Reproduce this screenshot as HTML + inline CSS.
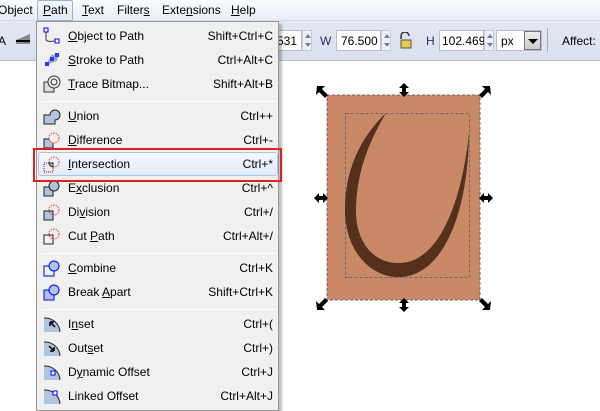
<!DOCTYPE html>
<html><head><style>
*{margin:0;padding:0;box-sizing:border-box}
body{width:600px;height:400px;overflow:hidden;background:#fff;font-family:"Liberation Sans",sans-serif;font-size:12px;color:#000;position:relative}
.mb{position:absolute;left:0;top:0;width:600px;height:21px;background:linear-gradient(#fafbfd,#e9edf6);border-bottom:1px solid #d5dbe8}
.mb span{position:absolute;top:3px}
.tb{position:absolute;left:0;top:21px;width:600px;height:40px;background:linear-gradient(#e4e8f3,#d9dfee);border-bottom:1px solid #b8bfcf}
.inp{position:absolute;top:30px;height:21px;background:#fff;border:1px solid #b5bccb;padding:3px 4px;font-size:12px}
.spin{position:absolute;top:30px;width:10px;height:21px;border:1px solid #c5cad6;background:#eef0f5}
.spin:before{content:"";position:absolute;left:2px;top:3px;border:3px solid transparent;border-bottom:4px solid #6a7fb0;border-top:0}
.spin:after{content:"";position:absolute;left:2px;top:12px;border:3px solid transparent;border-top:4px solid #6a7fb0;border-bottom:0}
.menu{position:absolute;left:36px;top:21px;width:243px;height:390px;background:#f0f0f0;border:1px solid #979797;box-shadow:3px 3px 2px rgba(0,0,0,.25)}
.it{position:absolute;left:31px;width:205px;height:22px;line-height:22px;font-size:12px}
.it .k{position:absolute;right:0;top:0}
.sep{position:absolute;left:5px;width:234px;height:1px;background:#d7d7d7;border-bottom:1px solid #fff}
.ic{position:absolute;left:6px;width:18px;height:18px}
u{text-decoration:underline}
</style></head><body>
<div class="mb">
<span style="left:-2px">Object</span>
<span style="left:37px;top:0;width:36px;height:21px;border:1px solid #9bb0d3;background:linear-gradient(#f6f9fd,#dfe8f5);border-radius:2px"></span>
<span style="left:43px"><u>P</u>ath</span>
<span style="left:82px"><u>T</u>ext</span>
<span style="left:117px">Filter<u>s</u></span>
<span style="left:162px">Exte<u>n</u>sions</span>
<span style="left:231px"><u>H</u>elp</span>
</div>
<div class="tb"></div>
<div style="position:absolute;left:-2px;top:34px;font-size:12px">A</div>
<svg style="position:absolute;left:14px;top:32px" width="18" height="14"><path d="M2 8 L16 2 L16 12 L2 12Z" fill="#888"/><path d="M2 9 H16" stroke="#000" stroke-width="2"/></svg>
<div class="inp" style="left:250px;width:52px;text-align:right">.531</div><div class="spin" style="left:302px"></div>
<span style="position:absolute;left:320px;top:34px;color:#203060">W</span>
<div class="inp" style="left:336px;width:45px">76.500</div><div class="spin" style="left:381px"></div>
<svg style="position:absolute;left:398px;top:32px" width="16" height="18"><path d="M3 7 V4 a4 4 0 0 1 8 0" fill="none" stroke="#333" stroke-width="1.5"/><rect x="3" y="8" width="10" height="8" fill="#e8c84a" stroke="#555"/></svg>
<span style="position:absolute;left:426px;top:34px;color:#203060">H</span>
<div class="inp" style="left:439px;width:45px;padding:3px 2px">102.469</div><div class="spin" style="left:484px"></div>
<div class="inp" style="left:496px;width:46px">px</div>
<div style="position:absolute;left:524px;top:31px;width:17px;height:19px;background:linear-gradient(#eee,#ccc);border:1px solid #777"><div style="position:absolute;left:3px;top:7px;border:5px solid transparent;border-top:5px solid #000;border-bottom:0"></div></div>
<div style="position:absolute;left:547px;top:28px;width:1px;height:24px;background:#aab"></div>
<span style="position:absolute;left:562px;top:34px">Affect:</span>

<svg style="position:absolute;left:300px;top:80px" width="210" height="240">
<rect x="27" y="15" width="153" height="205" fill="#c98966" stroke="#667" stroke-dasharray="3,2"/>
<rect x="45.5" y="33.5" width="124" height="164" fill="none" stroke="#667" stroke-dasharray="3,2"/>
<path d="M86 33 C60 58 45 90 45 130 C45 170 70 198 100 197 C140 196 168 140 169 53 C162 120 140 182 100 183 C72 184 55 160 56 128 C57 90 70 60 86 33Z" fill="#55301c"/>
<g fill="#000">
<path d="M17 6 l8 0 -3 3 6 6 -3 3 -6 -6 -3 3z"/>
<path d="M190 6 l-8 0 3 3 -6 6 3 3 6 -6 3 3z"/>
<path d="M17 230 l8 0 -3 -3 6 -6 -3 -3 -6 6 -3 -3z"/>
<path d="M190 230 l-8 0 3 -3 -6 -6 3 -3 6 6 3 -3z"/>
<path d="M104 3 l5 5 h-3 v4 h3 l-5 5 -5 -5 h3 v-4 h-3z"/>
<path d="M104 218 l5 5 h-3 v4 h3 l-5 5 -5 -5 h3 v-4 h-3z"/>
<path d="M14 118 l5 -5 v3 h4 v-3 l5 5 -5 5 v-3 h-4 v3z"/>
<path d="M179 118 l5 -5 v3 h4 v-3 l5 5 -5 5 v-3 h-4 v3z"/>
</g>
</svg>

<div class="menu">
<svg class="ic" style="top:5px"><rect x="1" y="1" width="4" height="4" fill="#fff" stroke="#00f"/><rect x="12" y="12" width="4" height="4" fill="#fff" stroke="#00f"/><path d="M3 5 V12 C3 14 6 15 12 14" fill="none" stroke="#333"/></svg>
<svg class="ic" style="top:29px"><path d="M3 14 L8 4 L16 3 L14 10Z" fill="#9ab"/><rect x="2" y="11" width="4" height="4" fill="#33f"/><rect x="7" y="6" width="4" height="4" fill="#33f"/><rect x="12" y="2" width="4" height="4" fill="#33f"/></svg>
<svg class="ic" style="top:53px"><rect x="1" y="7" width="10" height="10" fill="#ddd" stroke="#333"/><circle cx="11" cy="7" r="6" fill="#eee" stroke="#333"/><circle cx="11" cy="7" r="3" fill="none" stroke="#333"/></svg>
<div class="sep" style="top:79px"></div>
<svg class="ic" style="top:85px"><path d="M1 8 H7 A5 5 0 1 1 12 13 V17 H1Z" fill="#b0c4de" stroke="#222"/></svg>
<svg class="ic" style="top:109px"><rect x="1" y="8" width="9" height="9" fill="#b0c4de" stroke="#222"/><circle cx="11" cy="7" r="5" fill="#f0f0f0" stroke="#e44" stroke-dasharray="1.5,1"/></svg>
<div style="position:absolute;left:1px;top:130px;width:240px;height:24px;border:1px solid #a9c3e8;border-radius:3px;background:linear-gradient(#f3f7fc,#e3ecf8)"></div>
<svg class="ic" style="top:133px"><rect x="1" y="8" width="9" height="9" fill="none" stroke="#c00" stroke-dasharray="1,1"/><circle cx="11" cy="7" r="5" fill="none" stroke="#e44" stroke-dasharray="1.5,1"/><path d="M6 8 H10 V12 A5 5 0 0 1 6 8Z" fill="#b0c4de" stroke="#222"/></svg>
<svg class="ic" style="top:157px"><rect x="1" y="8" width="9" height="9" fill="#b0c4de" stroke="#222"/><circle cx="11" cy="7" r="5" fill="#b0c4de" stroke="#222"/></svg>
<svg class="ic" style="top:181px"><rect x="1" y="8" width="9" height="9" fill="#b0c4de" stroke="#222"/><circle cx="11" cy="7" r="5" fill="none" stroke="#e44" stroke-dasharray="1.5,1"/><path d="M6 8 H10 V12" fill="none" stroke="#222"/></svg>
<svg class="ic" style="top:205px"><rect x="1" y="8" width="9" height="9" fill="none" stroke="#222"/><circle cx="11" cy="7" r="5" fill="none" stroke="#e44" stroke-dasharray="1.5,1"/></svg>
<div class="sep" style="top:231px"></div>
<svg class="ic" style="top:237px"><rect x="1" y="7" width="10" height="10" fill="none" stroke="#00f"/><circle cx="11" cy="7" r="5" fill="#b0c4de" stroke="#00f"/></svg>
<svg class="ic" style="top:261px"><rect x="1" y="7" width="10" height="10" fill="#b0c4de" stroke="#00f"/><circle cx="11" cy="7" r="5" fill="#b0c4de" stroke="#00f"/></svg>
<div class="sep" style="top:287px"></div>
<svg class="ic" style="top:293px"><path d="M1 3 A15 15 0 0 1 17 17 H1Z" fill="#b0c4de"/><path d="M1 3 A15 15 0 0 1 17 17" fill="none" stroke="#222"/><path d="M12 12 L7 7 M7 7 h4 M7 7 v4" stroke="#000" stroke-width="1.5"/></svg>
<svg class="ic" style="top:317px"><path d="M1 3 A15 15 0 0 1 17 17 H1Z" fill="#b0c4de"/><path d="M1 3 A15 15 0 0 1 17 17" fill="none" stroke="#222"/><path d="M6 7 L11 12 M11 12 h-4 M11 12 v-4" stroke="#000" stroke-width="1.5"/></svg>
<svg class="ic" style="top:341px"><path d="M1 3 A15 15 0 0 1 17 17 H1Z" fill="#b0c4de"/><path d="M1 3 A15 15 0 0 1 17 17" fill="none" stroke="#222"/><rect x="8" y="8" width="4" height="4" fill="#fff" stroke="#00f"/></svg>
<svg class="ic" style="top:365px"><path d="M1 3 A15 15 0 0 1 17 17 H1Z" fill="#b0c4de"/><path d="M1 3 A15 15 0 0 1 17 17" fill="none" stroke="#222"/><rect x="10" y="4" width="4" height="4" fill="#fff" stroke="#00f"/></svg>

<div class="it" style="top:3px"><u>O</u>bject to Path<span class="k">Shift+Ctrl+C</span></div>
<div class="it" style="top:27px"><u>S</u>troke to Path<span class="k">Ctrl+Alt+C</span></div>
<div class="it" style="top:51px"><u>T</u>race Bitmap...<span class="k">Shift+Alt+B</span></div>
<div class="it" style="top:83px"><u>U</u>nion<span class="k">Ctrl++</span></div>
<div class="it" style="top:107px"><u>D</u>ifference<span class="k">Ctrl+-</span></div>
<div class="it" style="top:131px"><u>I</u>ntersection<span class="k">Ctrl+*</span></div>
<div class="it" style="top:155px">E<u>x</u>clusion<span class="k">Ctrl+^</span></div>
<div class="it" style="top:179px">Di<u>v</u>ision<span class="k">Ctrl+/</span></div>
<div class="it" style="top:203px">Cut <u>P</u>ath<span class="k">Ctrl+Alt+/</span></div>
<div class="it" style="top:235px"><u>C</u>ombine<span class="k">Ctrl+K</span></div>
<div class="it" style="top:259px">Break <u>A</u>part<span class="k">Shift+Ctrl+K</span></div>
<div class="it" style="top:291px">I<u>n</u>set<span class="k">Ctrl+(</span></div>
<div class="it" style="top:315px">Out<u>s</u>et<span class="k">Ctrl+)</span></div>
<div class="it" style="top:339px">D<u>y</u>namic Offset<span class="k">Ctrl+J</span></div>
<div class="it" style="top:363px">Linked Offset<span class="k">Ctrl+Alt+J</span></div>
</div>
<div style="position:absolute;left:33px;top:148px;width:249px;height:34px;border:2px solid #e02020"></div>
</body></html>
